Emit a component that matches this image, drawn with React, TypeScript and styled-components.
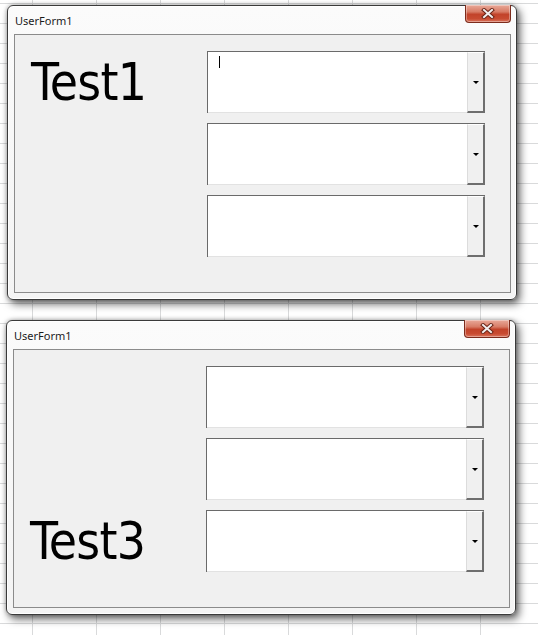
import React from 'react'
import styled, { createGlobalStyle } from 'styled-components'

const GlobalStyle = createGlobalStyle`
  html, body {
    margin: 0;
    padding: 0;
  }
  body {
    width: 538px;
    height: 635px;
    overflow: hidden;
    background-color: #ffffff;
    background-image:
      linear-gradient(to right, #d9dadb 1px, transparent 1px),
      linear-gradient(to bottom, #d9dadb 1px, transparent 1px);
    background-size: 64px 20px;
    background-position: 32px 3px;
    font-family: 'Noto Sans', 'Open Sans', sans-serif;
  }
`

const Desktop = styled.div`
  display: flex;
  flex-direction: column;
  gap: 20px;
  padding: 5px 0 0 7px;
`

const Window = styled.div<{ $shift?: number }>`
  width: 510px;
  height: 295px;
  box-sizing: border-box;
  margin-left: ${p => p.$shift || 0}px;
  display: flex;
  flex-direction: column;
  background: linear-gradient(to bottom, #fbfbfb 0%, #f4f4f4 100%);
  border: 1px solid #3a3a3a;
  border-radius: 6px;
  box-shadow:
    inset 0 0 0 1px #ffffff,
    3px 4px 8px rgba(0, 0, 0, 0.6),
    0 0 4px rgba(0, 0, 0, 0.3);
  padding: 0 5px 6px 6px;
`

const TitleBar = styled.div`
  height: 28px;
  display: flex;
  align-items: flex-start;
  justify-content: space-between;
`

const Title = styled.span`
  font-size: 11px;
  color: #1b1b1b;
  padding: 8px 0 0 1px;
  line-height: 14px;
`

const CloseButton = styled.div`
  width: 46px;
  height: 18px;
  box-sizing: border-box;
  margin-top: -1px;
  border: 1px solid #7c2b1c;
  border-top: none;
  border-radius: 0 0 4px 4px;
  background: linear-gradient(
    to bottom,
    #e9a999 0%,
    #d87c66 40%,
    #c2432a 55%,
    #c84b31 80%,
    #d9735c 100%
  );
  box-shadow: inset 0 0 0 1px rgba(255, 255, 255, 0.35);
  display: flex;
  align-items: center;
  justify-content: center;
`

const ClientArea = styled.div`
  flex: 1;
  background: #f0f0f0;
  border: 1px solid #8b8b8b;
  display: grid;
  grid-template-columns: 192px 278px;
  grid-template-rows: repeat(3, 62px);
  row-gap: 10px;
  align-content: start;
  padding-top: 16px;
`

const BigLabel = styled.div<{ $row: number }>`
  grid-column: 1;
  grid-row: ${p => p.$row};
  align-self: center;
  padding-left: 16px;
  font-family: 'DejaVu Sans Condensed', 'DejaVu Sans', sans-serif;
  font-stretch: condensed;
  font-size: 51px;
  line-height: 1;
  letter-spacing: -0.7px;
  color: #000;
`

const Combo = styled.div<{ $row: number }>`
  grid-column: 2;
  grid-row: ${p => p.$row};
  display: flex;
  box-sizing: border-box;
  border-top: 1px solid #6a6a6a;
  border-left: 1px solid #6a6a6a;
  box-shadow: inset 1px 1px 0 #a5a5a5;
`

const Field = styled.div`
  flex: 1;
  position: relative;
  background: #ffffff;
  border-bottom: 1px solid #e2e2e2;
`

const Caret = styled.span`
  position: absolute;
  left: 11px;
  top: 4px;
  width: 1px;
  height: 12px;
  background: #000;
`

const DropButton = styled.div`
  width: 15px;
  background: #f0f0f0;
  border-left: 1px solid #dcdcdc;
  border-top: 1px solid #ffffff;
  border-right: 2px solid #6e6e6e;
  border-bottom: 2px solid #6e6e6e;
  display: flex;
  align-items: center;
  justify-content: center;
`

const Arrow = styled.span`
  width: 0;
  height: 0;
  margin-top: 1px;
  border-left: 3px solid transparent;
  border-right: 3px solid transparent;
  border-top: 3px solid #000;
`

const CloseGlyph = () => (
  <svg width='14' height='11' viewBox='0 0 14 11'>
    <path
      d='M3 2 L11 9 M11 2 L3 9'
      stroke='#6b2416'
      strokeWidth='4'
      strokeLinecap='square'
    />
    <path
      d='M3 2 L11 9 M11 2 L3 9'
      stroke='#f2eeee'
      strokeWidth='2'
      strokeLinecap='square'
    />
  </svg>
)

interface UserFormProps {
  label: string
  labelRow: number
  focused?: boolean
  shift?: number
}

const UserForm: React.FC<UserFormProps> = ({ label, labelRow, focused, shift }) => {
  return (
    <Window $shift={shift}>
      <TitleBar>
        <Title>UserForm1</Title>
        <CloseButton>
          <CloseGlyph />
        </CloseButton>
      </TitleBar>
      <ClientArea>
        <BigLabel $row={labelRow}>{label}</BigLabel>
        {[1, 2, 3].map(row => (
          <Combo key={row} $row={row}>
            <Field>{focused && row === 1 && <Caret />}</Field>
            <DropButton>
              <Arrow />
            </DropButton>
          </Combo>
        ))}
      </ClientArea>
    </Window>
  )
}

export default function App() {
  return (
    <>
      <GlobalStyle />
      <Desktop>
        <UserForm label='Test1' labelRow={1} focused />
        <UserForm label='Test3' labelRow={3} shift={-1} />
      </Desktop>
    </>
  )
}
